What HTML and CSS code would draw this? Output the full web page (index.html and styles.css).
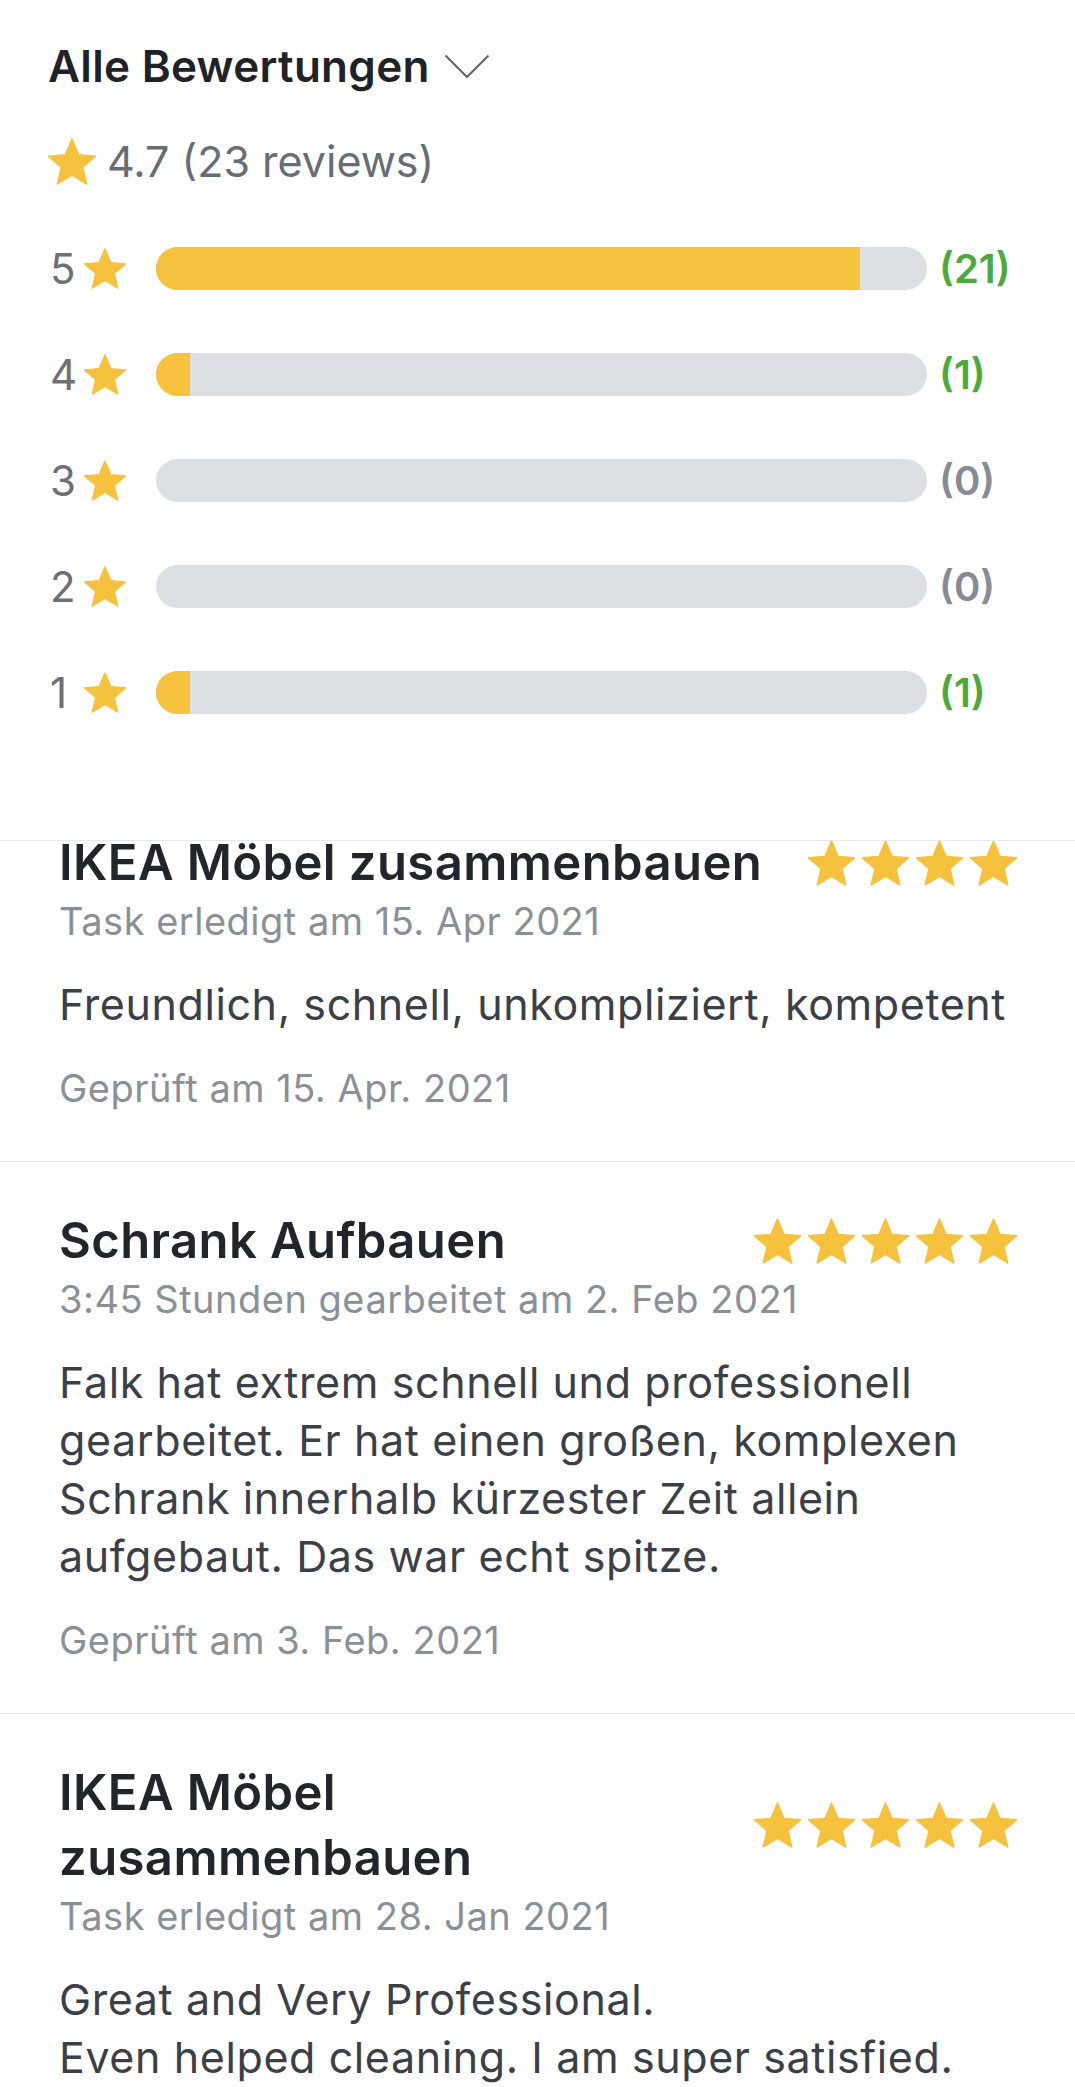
FILE: index.html
```html
<!DOCTYPE html>
<html lang="de">
<head>
<meta charset="utf-8">
<title>Alle Bewertungen</title>
<link rel="stylesheet" href="styles.css">
</head>
<body>
<svg width="0" height="0" class="defs" aria-hidden="true">
  <defs>
    <symbol id="star" viewBox="2 1.6 20 19.8">
      <path d="M12 17.27L18.18 21l-1.64-7.03L22 9.24l-7.19-.61L12 2 9.19 8.63 2 9.24l5.46 4.73L5.82 21z" fill="#f6c23e" stroke="#f6c23e" stroke-width="0.6" stroke-linejoin="round"/>
    </symbol>
  </defs>
</svg>

<section class="summary">
  <h2 class="summary-title">
    <span>Alle Bewertungen</span>
    <svg class="chevron" width="46" height="25" viewBox="0 0 46 25"><polyline points="1.5,1.5 23,23 44.5,1.5" fill="none" stroke="#5f6368" stroke-width="2"/></svg>
  </h2>
  <div class="avg">
    <svg class="avg-star"><use href="#star"/></svg>
    <span class="avg-text">4.7 (23 reviews)</span>
  </div>

  <div class="dist">
    <div class="dist-row">
      <span class="dist-num">5</span>
      <svg class="dist-star"><use href="#star"/></svg>
      <div class="track"><div class="fill" style="width:91.3%"></div></div>
      <span class="dist-count pos">(21)</span>
    </div>
    <div class="dist-row">
      <span class="dist-num">4</span>
      <svg class="dist-star"><use href="#star"/></svg>
      <div class="track"><div class="fill" style="width:4.35%"></div></div>
      <span class="dist-count pos">(1)</span>
    </div>
    <div class="dist-row">
      <span class="dist-num">3</span>
      <svg class="dist-star"><use href="#star"/></svg>
      <div class="track"><div class="fill" style="width:0%"></div></div>
      <span class="dist-count zero">(0)</span>
    </div>
    <div class="dist-row">
      <span class="dist-num">2</span>
      <svg class="dist-star"><use href="#star"/></svg>
      <div class="track"><div class="fill" style="width:0%"></div></div>
      <span class="dist-count zero">(0)</span>
    </div>
    <div class="dist-row">
      <span class="dist-num">1</span>
      <svg class="dist-star"><use href="#star"/></svg>
      <div class="track"><div class="fill" style="width:4.35%"></div></div>
      <span class="dist-count pos">(1)</span>
    </div>
  </div>
</section>

<section class="reviews">
  <div class="reviews-list">
    <article class="review">
      <div class="review-head">
        <h3 class="review-title">IKEA Möbel zusammenbauen</h3>
        <div class="review-stars">
          <svg class="rstar"><use href="#star"/></svg>
          <svg class="rstar"><use href="#star"/></svg>
          <svg class="rstar"><use href="#star"/></svg>
          <svg class="rstar"><use href="#star"/></svg>
        </div>
      </div>
      <p class="review-meta">Task erledigt am 15. Apr 2021</p>
      <p class="review-body">Freundlich, schnell, unkompliziert, kompetent</p>
      <p class="review-checked">Geprüft am 15. Apr. 2021</p>
    </article>

    <article class="review">
      <div class="review-head">
        <h3 class="review-title">Schrank Aufbauen</h3>
        <div class="review-stars">
          <svg class="rstar"><use href="#star"/></svg>
          <svg class="rstar"><use href="#star"/></svg>
          <svg class="rstar"><use href="#star"/></svg>
          <svg class="rstar"><use href="#star"/></svg>
          <svg class="rstar"><use href="#star"/></svg>
        </div>
      </div>
      <p class="review-meta">3:45 Stunden gearbeitet am 2. Feb 2021</p>
      <p class="review-body">Falk hat extrem schnell und professionell gearbeitet. Er hat einen großen, komplexen Schrank innerhalb kürzester Zeit allein aufgebaut. Das war echt spitze.</p>
      <p class="review-checked">Geprüft am 3. Feb. 2021</p>
    </article>

    <article class="review">
      <div class="review-head">
        <h3 class="review-title">IKEA Möbel zusammenbauen</h3>
        <div class="review-stars">
          <svg class="rstar"><use href="#star"/></svg>
          <svg class="rstar"><use href="#star"/></svg>
          <svg class="rstar"><use href="#star"/></svg>
          <svg class="rstar"><use href="#star"/></svg>
          <svg class="rstar"><use href="#star"/></svg>
        </div>
      </div>
      <p class="review-meta">Task erledigt am 28. Jan 2021</p>
      <p class="review-body">Great and Very Professional.<br>Even helped cleaning. I am super satisfied.</p>
    </article>
  </div>
</section>
</body>
</html>
```

FILE: styles.css
```css
* { box-sizing: border-box; }
html, body { margin: 0; padding: 0; background: #ffffff; }
body {
  font-family: Inter, Lato, "Noto Sans", "Liberation Sans", sans-serif;
  color: #22262b;
  width: 1075px;
  overflow: hidden;
}
.defs { position: absolute; width: 0; height: 0; }

.summary { padding: 42px 0 0 48px; }
.summary-title {
  margin: 0;
  display: flex;
  align-items: center;
  gap: 14px;
  font-size: 44px;
  line-height: 48px;
  font-weight: 600;
  letter-spacing: 0.3px;
  color: #1f2328;
}
.chevron { display: block; }

.avg {
  margin-top: 45px;
  display: flex;
  align-items: center;
  gap: 11px;
  height: 52px;
}
.avg-star { width: 48px; height: 47px; display: block; }
.avg-text {
  font-size: 43px;
  line-height: 52px;
  color: #676d74;
}

.dist { margin-top: 60px; padding-bottom: 126px; }
.dist-row {
  display: flex;
  align-items: center;
  height: 43px;
  margin-bottom: 63px;
}
.dist-row:last-child { margin-bottom: 0; }
.dist-num {
  width: 36px;
  padding-left: 2px;
  font-size: 42px;
  line-height: 43px;
  color: #6d7074;
}
.dist-star { width: 42px; height: 41px; display: block; margin-right: 30px; }
.track {
  flex: 1;
  height: 43px;
  border-radius: 22px;
  background: #dcdfe4;
  overflow: hidden;
}
.fill { height: 100%; background: #f6c23e; }
.dist-count {
  width: 148px;
  padding-left: 12px;
  font-size: 40px;
  line-height: 43px;
  font-weight: 600;
}
.dist-count.pos { color: #4caa3c; }
.dist-count.zero { color: #868c95; }

.reviews {
  border-top: 1px solid #e6e7e9;
  overflow: hidden;
}
.reviews-list { margin-top: -57px; }
.review {
  padding: 46px 58px 51px 59px;
  border-bottom: 1px solid #e6e7e9;
}
.review-head {
  display: flex;
  align-items: center;
  gap: 30px;
}
.review-title {
  flex: 1;
  margin: 0;
  font-size: 49px;
  line-height: 65px;
  font-weight: 600;
  letter-spacing: 0.4px;
  color: #22262b;
}
.review-stars { display: flex; gap: 7px; }
.rstar { width: 47px; height: 46px; display: block; }
.review-meta {
  margin: 4px 0 0;
  font-size: 38px;
  line-height: 44px;
  letter-spacing: 0.5px;
  color: #8a9098;
}
.review-body {
  margin: 32px 0 0;
  font-size: 43px;
  line-height: 58px;
  letter-spacing: 0.6px;
  color: #3b4048;
}
.review-checked {
  margin: 33px 0 0;
  font-size: 38px;
  line-height: 44px;
  letter-spacing: 0.5px;
  color: #8a9098;
}
```
